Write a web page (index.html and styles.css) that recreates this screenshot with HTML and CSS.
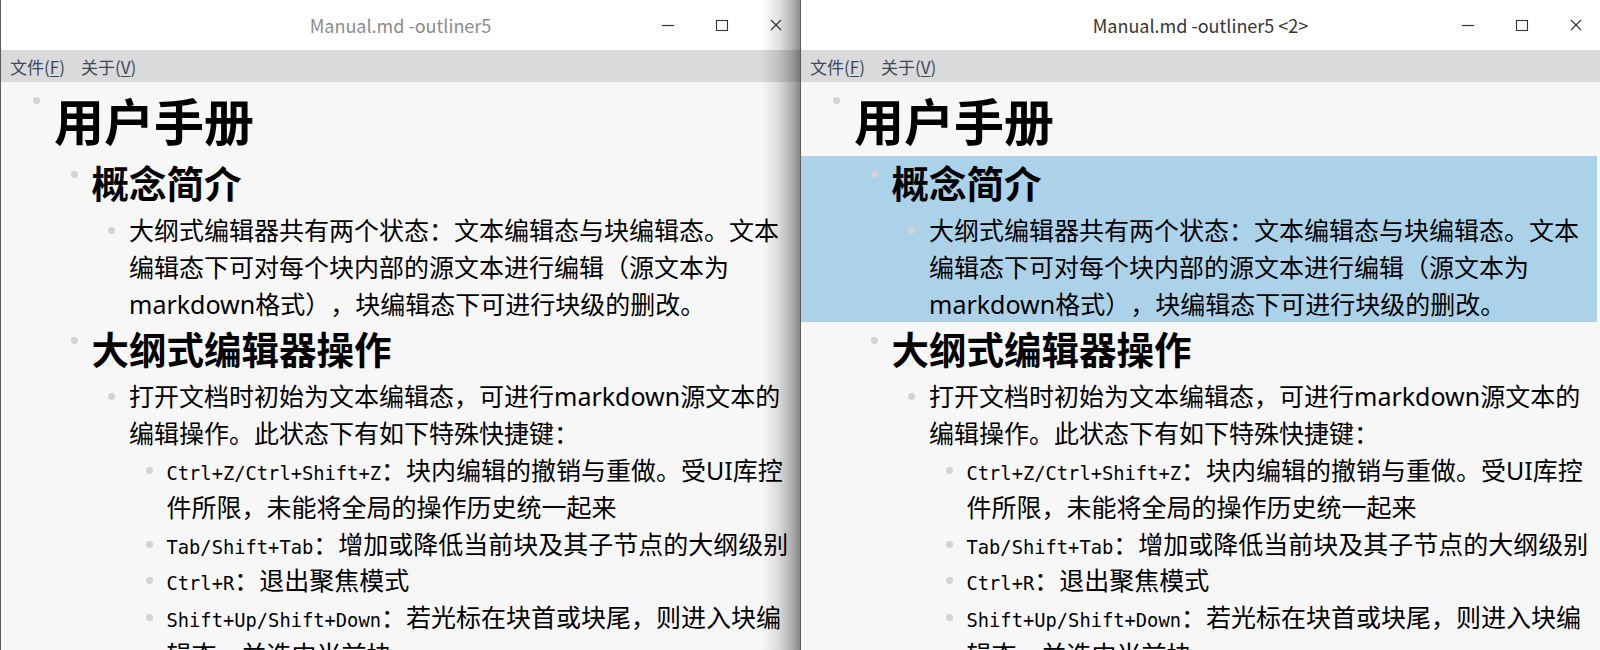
FILE: index.html
```html
<!DOCTYPE html>
<html lang="zh-CN">
<head>
<meta charset="utf-8">
<title>outliner5</title>
<link rel="stylesheet" href="styles.css">
</head>
<body>
<div class="desktop">
  <section class="window inactive">
    <header class="titlebar">
      <div class="spacer"></div>
      <div class="title">Manual.md -outliner5</div>
      <div class="controls">
        <span class="ctl"><svg width="14" height="14" viewBox="0 0 14 14"><path d="M1 7.5h12" stroke="#333" stroke-width="1.2" fill="none"/></svg></span>
        <span class="ctl"><svg width="14" height="14" viewBox="0 0 14 14"><rect x="1.5" y="2.5" width="11" height="10" stroke="#333" stroke-width="1.1" fill="none"/></svg></span>
        <span class="ctl"><svg width="14" height="14" viewBox="0 0 14 14"><path d="M2 2l10 10M12 2L2 12" stroke="#333" stroke-width="1.1" fill="none"/></svg></span>
      </div>
    </header>
    <nav class="menubar"><span class="menu">文件(<u>F</u>)</span><span class="menu">关于(<u>V</u>)</span></nav>
    <main class="outline">
      <div class="row h1 d0"><div class="dotcol"><span class="dot"></span></div><div class="text">用户手册</div></div>
      <div class="group">
        <div class="row h2 d1"><div class="dotcol"><span class="dot"></span></div><div class="text">概念简介</div></div>
        <div class="row d2"><div class="dotcol"><span class="dot"></span></div><div class="text">大纲式编辑器共有两个状态：文本编辑态与块编辑态。文本编辑态下可对每个块内部的源文本进行编辑（源文本为markdown格式），块编辑态下可进行块级的删改。</div></div>
      </div>
      <div class="row h2 d1"><div class="dotcol"><span class="dot"></span></div><div class="text">大纲式编辑器操作</div></div>
      <div class="row d2"><div class="dotcol"><span class="dot"></span></div><div class="text">打开文档时初始为文本编辑态，可进行markdown源文本的编辑操作。此状态下有如下特殊快捷键：</div></div>
      <div class="row d3"><div class="dotcol"><span class="dot"></span></div><div class="text"><span class="code">Ctrl+Z/Ctrl+Shift+Z</span>：块内编辑的撤销与重做。受UI库控件所限，未能将全局的操作历史统一起来</div></div>
      <div class="row d3"><div class="dotcol"><span class="dot"></span></div><div class="text"><span class="code">Tab/Shift+Tab</span>：增加或降低当前块及其子节点的大纲级别</div></div>
      <div class="row d3"><div class="dotcol"><span class="dot"></span></div><div class="text"><span class="code">Ctrl+R</span>：退出聚焦模式</div></div>
      <div class="row d3"><div class="dotcol"><span class="dot"></span></div><div class="text"><span class="code">Shift+Up/Shift+Down</span>：若光标在块首或块尾，则进入块编辑态，并选中当前块</div></div>
    </main>
    <div class="shade"></div>
  </section>

  <section class="window active">
    <header class="titlebar">
      <div class="spacer"></div>
      <div class="title">Manual.md -outliner5 &lt;2&gt;</div>
      <div class="controls">
        <span class="ctl"><svg width="14" height="14" viewBox="0 0 14 14"><path d="M1 7.5h12" stroke="#333" stroke-width="1.2" fill="none"/></svg></span>
        <span class="ctl"><svg width="14" height="14" viewBox="0 0 14 14"><rect x="1.5" y="2.5" width="11" height="10" stroke="#333" stroke-width="1.1" fill="none"/></svg></span>
        <span class="ctl"><svg width="14" height="14" viewBox="0 0 14 14"><path d="M2 2l10 10M12 2L2 12" stroke="#333" stroke-width="1.1" fill="none"/></svg></span>
      </div>
    </header>
    <nav class="menubar"><span class="menu">文件(<u>F</u>)</span><span class="menu">关于(<u>V</u>)</span></nav>
    <main class="outline">
      <div class="row h1 d0"><div class="dotcol"><span class="dot"></span></div><div class="text">用户手册</div></div>
      <div class="group selected">
        <div class="row h2 d1"><div class="dotcol"><span class="dot"></span></div><div class="text">概念简介</div></div>
        <div class="row d2"><div class="dotcol"><span class="dot"></span></div><div class="text">大纲式编辑器共有两个状态：文本编辑态与块编辑态。文本编辑态下可对每个块内部的源文本进行编辑（源文本为markdown格式），块编辑态下可进行块级的删改。</div></div>
      </div>
      <div class="row h2 d1"><div class="dotcol"><span class="dot"></span></div><div class="text">大纲式编辑器操作</div></div>
      <div class="row d2"><div class="dotcol"><span class="dot"></span></div><div class="text">打开文档时初始为文本编辑态，可进行markdown源文本的编辑操作。此状态下有如下特殊快捷键：</div></div>
      <div class="row d3"><div class="dotcol"><span class="dot"></span></div><div class="text"><span class="code">Ctrl+Z/Ctrl+Shift+Z</span>：块内编辑的撤销与重做。受UI库控件所限，未能将全局的操作历史统一起来</div></div>
      <div class="row d3"><div class="dotcol"><span class="dot"></span></div><div class="text"><span class="code">Tab/Shift+Tab</span>：增加或降低当前块及其子节点的大纲级别</div></div>
      <div class="row d3"><div class="dotcol"><span class="dot"></span></div><div class="text"><span class="code">Ctrl+R</span>：退出聚焦模式</div></div>
      <div class="row d3"><div class="dotcol"><span class="dot"></span></div><div class="text"><span class="code">Shift+Up/Shift+Down</span>：若光标在块首或块尾，则进入块编辑态，并选中当前块</div></div>
    </main>
  </section>
</div>
</body>
</html>
```
FILE: styles.css
```css
html, body {
  margin: 0;
  padding: 0;
  width: 1600px;
  height: 650px;
  overflow: hidden;
  background: #2d4a6b;
}

.desktop {
  display: flex;
  width: 1600px;
  height: 650px;
}

.window {
  position: relative;
  width: 800px;
  height: 650px;
  box-sizing: border-box;
  border-left: 1px solid #5c5c5c;
  background: #f7f7f7;
  display: flex;
  flex-direction: column;
  overflow: hidden;
}

.titlebar {
  height: 50px;
  flex: none;
  background: #ffffff;
  display: grid;
  grid-template-columns: 1fr auto 1fr;
  align-items: center;
}

.title {
  font-family: "Noto Sans CJK SC", "Noto Sans", sans-serif;
  font-size: 18px;
  line-height: 50px;
  white-space: nowrap;
}

.inactive .title { color: #8c8c8c; }
.active .title { color: #363636; }

.controls {
  justify-self: end;
  display: flex;
  gap: 6px;
  height: 50px;
  align-items: center;
}

.ctl {
  width: 48px;
  height: 50px;
  display: flex;
  align-items: center;
  justify-content: center;
}

.ctl svg { display: block; margin-top: -1px; }

.menubar {
  height: 32px;
  flex: none;
  background: #dadada;
  display: flex;
  align-items: center;
  gap: 16px;
  padding-left: 9px;
  font-family: "Noto Sans CJK SC", sans-serif;
  font-size: 17px;
  color: #3a475a;
}

.menu u { text-decoration-thickness: 1px; text-underline-offset: 2px; }

.outline {
  flex: 1;
  padding-right: 3px;
  font-family: "Noto Sans", "Noto Sans CJK SC", sans-serif;
  font-size: 25px;
  line-height: 36.8px;
  color: #000;
  text-spacing-trim: space-all;
}

.row {
  display: flex;
  align-items: flex-start;
}

.d0 { padding-left: 0; }
.d1 { padding-left: 37.5px; }
.d2 { padding-left: 75px; }
.d3 { padding-left: 112.5px; }

.dotcol {
  width: 53px;
  flex: none;
}

.dot {
  display: block;
  width: 7px;
  height: 7px;
  border-radius: 50%;
  background: #d3d3d3;
  margin-left: 32px;
  margin-top: 15px;
}

.text {
  flex: 1;
  min-width: 0;
}

.h1 .text {
  font-size: 50px;
  font-weight: 700;
  line-height: 68px;
  padding-top: 6px;
}

.h2 .text {
  font-size: 37.5px;
  font-weight: 700;
  line-height: 56px;
}

.code {
  font-family: "DejaVu Sans Mono", monospace;
  font-size: 18.75px;
  line-height: 1;
}

.group.selected {
  background: #acd2ea;
}

.shade {
  position: absolute;
  top: 0;
  right: 0;
  width: 38px;
  height: 100%;
  background: linear-gradient(to right, rgba(0,0,0,0) 0%, rgba(0,0,0,0.12) 45%, rgba(0,0,0,0.3) 80%, rgba(0,0,0,0.45) 100%);
  pointer-events: none;
}
```
